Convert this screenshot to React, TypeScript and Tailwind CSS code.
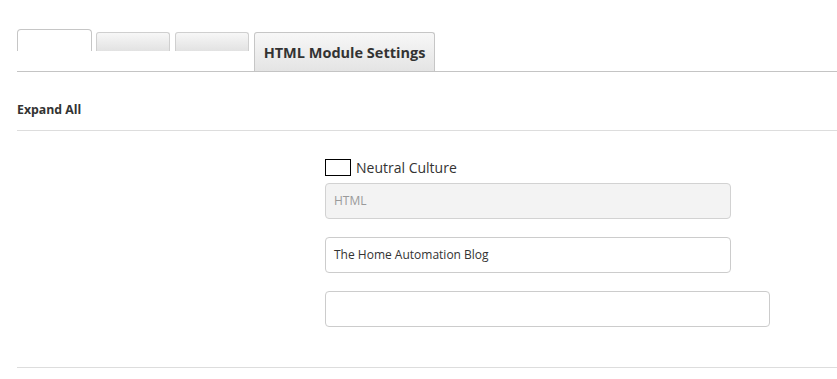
import React from "react";

export default function App() {
  return (
    <div className="w-[837px] h-[379px] bg-white pl-[17px] overflow-hidden" style={{ fontFamily: '"Open Sans", "Liberation Sans", sans-serif' }}>
      {/* Tabs */}
      <div className="flex items-start pt-[29px] border-b border-[#c4c4c4]">
        <div className="w-[75px] h-[22px] bg-white border border-b-0 border-[#c6c6c6] rounded-t-[4px]" />
        <div className="ml-[4px] mt-[3px] w-[74px] h-[19px] border border-b-0 border-[#cfcfcf] rounded-t-[3px] bg-gradient-to-b from-[#f7f7f7] to-[#e2e2e2]" />
        <div className="ml-[5px] mt-[3px] w-[74px] h-[19px] border border-b-0 border-[#cfcfcf] rounded-t-[3px] bg-gradient-to-b from-[#f7f7f7] to-[#e2e2e2]" />
        <div className="ml-[5px] mt-[3px] w-[181px] h-[39px] border border-b-0 border-[#c6c6c6] rounded-t-[3px] bg-gradient-to-b from-[#f7f7f7] to-[#e4e4e4] flex items-center justify-center">
          <span className="text-[14.5px] font-bold text-[#333] leading-none mt-[3px]">HTML Module Settings</span>
        </div>
      </div>

      {/* Expand All */}
      <div className="pt-[30px] pb-[12px] border-b border-[#dddddd]">
        <span className="block text-[12.3px] leading-[16px] font-bold text-[#333]">Expand All</span>
      </div>

      {/* Content */}
      <div className="pl-[308px] pt-[28px] pb-[40px] border-b border-[#dddddd]">
        <div className="flex items-center h-[17px]">
          <div className="w-[26px] h-[17px] border border-black bg-white" />
          <span className="ml-[5px] text-[14px] leading-[17px] text-[#333]">Neutral Culture</span>
        </div>
        <div className="mt-[7px] w-[406px] h-[36px] rounded-[4px] border border-[#d2d2d2] bg-[#f3f3f3] flex items-center px-[8px]">
          <span className="text-[12px] text-[#9a9a9a]">HTML</span>
        </div>
        <div className="mt-[18px] w-[406px] h-[36px] rounded-[4px] border border-[#cccccc] bg-white flex items-center px-[8px]">
          <span className="text-[12px] text-[#333]">The Home Automation Blog</span>
        </div>
        <div className="mt-[18px] w-[445px] h-[36px] rounded-[4px] border border-[#cccccc] bg-white" />
      </div>
    </div>
  );
}
